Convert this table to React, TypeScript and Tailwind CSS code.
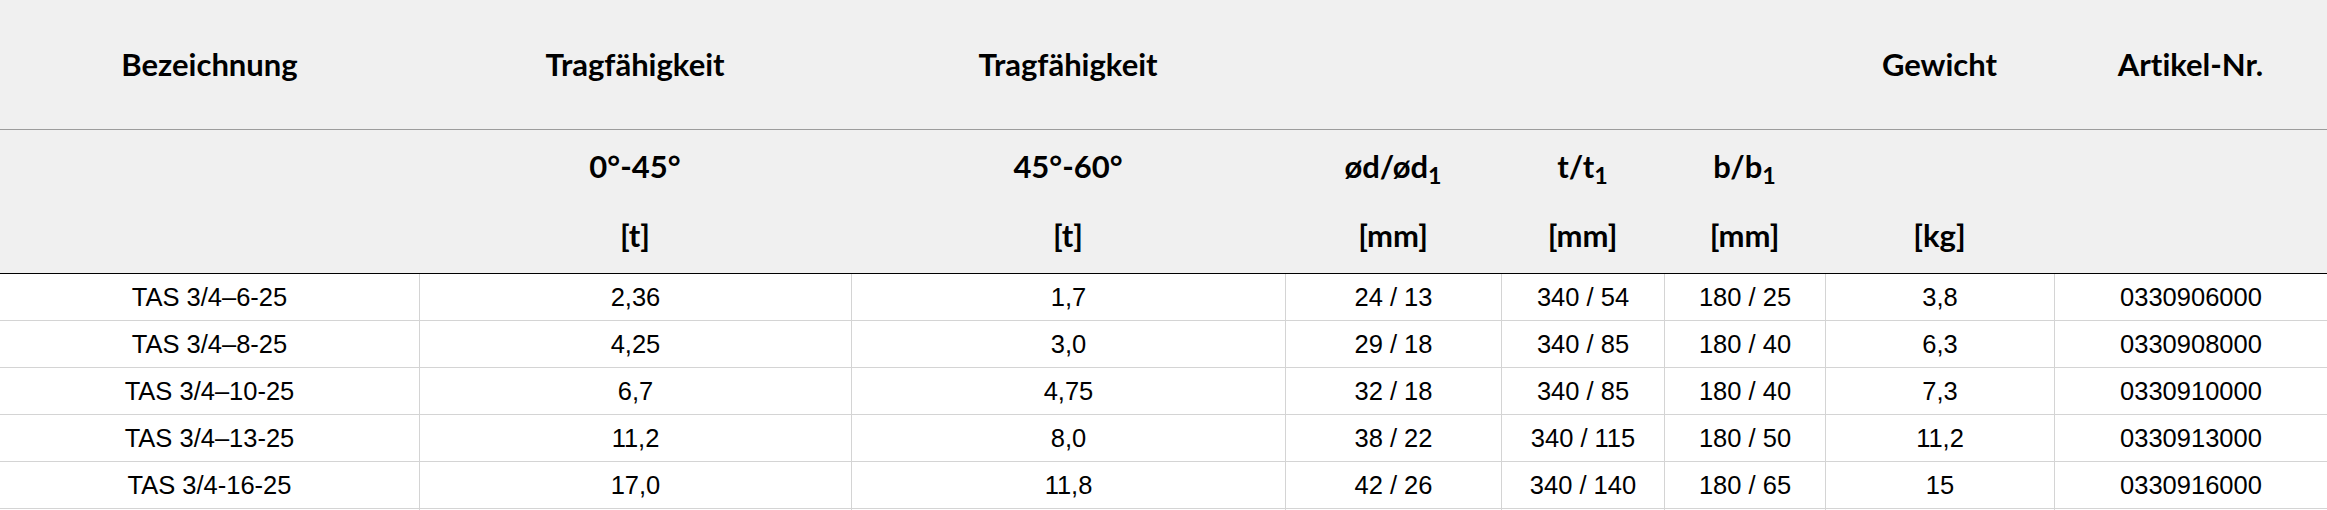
import React from "react"

const GRID = "grid grid-cols-[419px_432px_434px_216px_163px_161px_229px_273px]"

const rows = [
  ["TAS 3/4–6-25", "2,36", "1,7", "24 / 13", "340 / 54", "180 / 25", "3,8", "0330906000"],
  ["TAS 3/4–8-25", "4,25", "3,0", "29 / 18", "340 / 85", "180 / 40", "6,3", "0330908000"],
  ["TAS 3/4–10-25", "6,7", "4,75", "32 / 18", "340 / 85", "180 / 40", "7,3", "0330910000"],
  ["TAS 3/4–13-25", "11,2", "8,0", "38 / 22", "340 / 115", "180 / 50", "11,2", "0330913000"],
  ["TAS 3/4-16-25", "17,0", "11,8", "42 / 26", "340 / 140", "180 / 65", "15", "0330916000"],
  ["", "", "", "", "", "", "", ""],
]

function HeadCell({ top, bottom }: { top?: React.ReactNode; bottom?: React.ReactNode }) {
  return (
    <div className="flex flex-col items-center pt-[19px] leading-[34px]">
      <div className="h-[34px]">{top}</div>
      <div className="h-[35px]" />
      <div className="h-[34px]">{bottom}</div>
    </div>
  )
}

export default function App() {
  return (
    <div className="w-[2327px] h-[510px] overflow-hidden bg-white">
      {/* Kopfzeilen */}
      <div className="bg-[#f0f0f0] text-black font-bold text-[31px] [font-variant-ligatures:none] font-['Lato','Open_Sans',sans-serif]">
        <div className={GRID + " h-[130px] items-center text-center border-b border-[#9c9c9c]"}>
          <div>Bezeichnung</div>
          <div>Tragfähigkeit</div>
          <div>Tragfähigkeit</div>
          <div />
          <div />
          <div />
          <div>Gewicht</div>
          <div>Artikel-Nr.</div>
        </div>
        <div className={GRID + " h-[144px] border-b border-black"}>
          <div />
          <HeadCell top="0°-45°" bottom="[t]" />
          <HeadCell top="45°-60°" bottom="[t]" />
          <HeadCell top={<>ød/ød<sub>1</sub></>} bottom="[mm]" />
          <HeadCell top={<>t/t<sub>1</sub></>} bottom="[mm]" />
          <HeadCell top={<>b/b<sub>1</sub></>} bottom="[mm]" />
          <HeadCell bottom="[kg]" />
          <div />
        </div>
      </div>

      {/* Daten */}
      <div className="font-['Liberation_Sans',Arial,sans-serif] text-[25.5px] text-black">
        {rows.map((r, i) => (
          <div key={i} className={GRID}>
            {r.map((c, j) => (
              <div
                key={j}
                className={
                  j === 0
                    ? "h-[47px] flex items-center justify-center border-b border-[#d4d4d4]"
                    : "h-[47px] flex items-center justify-center border-b border-l border-[#d4d4d4]"
                }
              >
                {c}
              </div>
            ))}
          </div>
        ))}
      </div>
    </div>
  )
}
